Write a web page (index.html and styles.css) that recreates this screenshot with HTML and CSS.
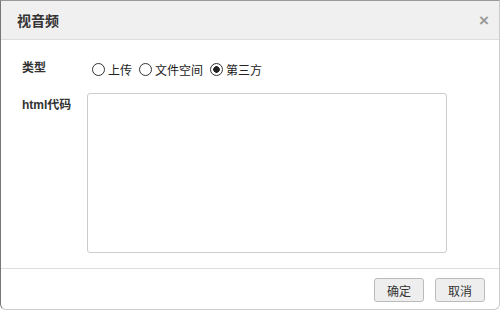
FILE: index.html
```html
<!DOCTYPE html>
<html lang="zh-CN">
<head>
  <meta charset="UTF-8">
  <title>视音频</title>
  <link rel="stylesheet" href="styles.css">
</head>
<body>
  <div class="dialog">
    <div class="dialog-header">
      <h3 class="dialog-title">视音频</h3>
      <span class="dialog-close">&times;</span>
    </div>

    <div class="dialog-body">
      <!-- source type -->
      <div class="form-row">
        <label class="form-label">类型</label>
        <div class="radio-group">
          <label class="radio"><input type="radio" name="type"><span>上传</span></label>
          <label class="radio"><input type="radio" name="type"><span>文件空间</span></label>
          <label class="radio"><input type="radio" name="type" checked><span>第三方</span></label>
        </div>
      </div>

      <!-- embed code -->
      <div class="form-row code-row">
        <label class="form-label">html代码</label>
        <textarea class="code-input"></textarea>
      </div>
    </div>

    <div class="dialog-footer">
      <button class="btn">确定</button>
      <button class="btn">取消</button>
    </div>
  </div>
</body>
</html>
```

FILE: styles.css
```css
body {
  margin: 0;
  background: #fff;
  font-family: "Liberation Sans", "Noto Sans CJK SC", sans-serif;
  font-size: 12px;
  color: #333;
}

.dialog {
  width: 500px;
  height: 310px;
  box-sizing: border-box;
  border: 1px solid #ccc;
  border-left-color: #777;
  border-top-color: #999;
  border-radius: 0 0 6px 6px;
  display: flex;
  flex-direction: column;
  overflow: hidden;
}

.dialog-header {
  height: 38px;
  background: #f0f0f0;
  border-bottom: 1px solid #ddd;
  display: flex;
  align-items: center;
  justify-content: space-between;
  padding: 0 10px 0 16px;
}

.dialog-title {
  margin: 0;
  font-size: 14px;
  font-weight: bold;
  color: #333;
}

.dialog-close {
  font-size: 17px;
  font-weight: bold;
  color: #999;
  cursor: pointer;
  line-height: 1;
}

.dialog-body {
  flex: 1;
  padding: 18px 20px 0 21px;
}

.form-row {
  display: flex;
  align-items: flex-start;
}

.form-label {
  width: 65px;
  flex-shrink: 0;
  font-weight: bold;
  line-height: 20px;
}

.radio-group {
  display: flex;
  align-items: center;
  height: 20px;
  margin-top: 1px;
}

.radio {
  display: flex;
  align-items: center;
  color: #222;
  margin-right: 2px;
}

.radio input {
  appearance: none;
  width: 13px;
  height: 13px;
  margin: 1px 3px 0 5px;
  border: 1px solid #333;
  border-radius: 50%;
  box-sizing: border-box;
  background: #fff;
}

.radio input:checked {
  background: radial-gradient(circle, #222 0, #222 3px, #fff 3.5px);
}

.code-row {
  margin-top: 14px;
}

.code-row .form-label {
  padding-top: 2px;
}

.code-input {
  width: 360px;
  height: 160px;
  box-sizing: border-box;
  border: 1px solid #ccc;
  border-radius: 3px;
  resize: none;
  margin: 0;
}

.dialog-footer {
  border-top: 1px solid #ddd;
  height: 41px;
  display: flex;
  justify-content: flex-end;
  align-items: flex-start;
  gap: 11px;
  padding: 9px 14px 0 0;
  box-sizing: border-box;
}

.btn {
  width: 50px;
  height: 24px;
  background: #eee;
  border: 1px solid #bbb;
  border-radius: 3px;
  font-family: inherit;
  font-size: 12px;
  color: #333;
  padding: 0;
  cursor: pointer;
}
```
